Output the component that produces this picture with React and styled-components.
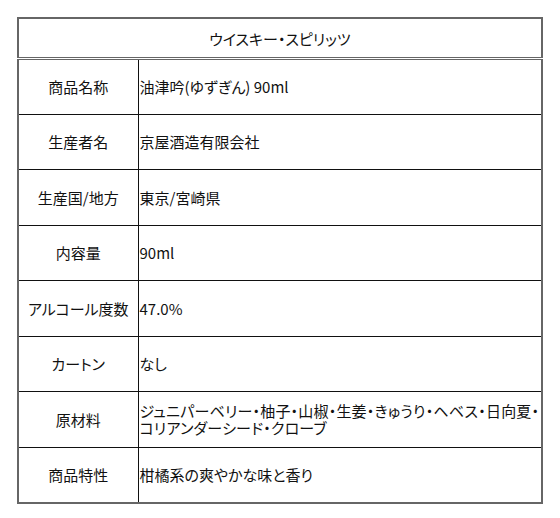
import React from "react";
import styled, { createGlobalStyle } from "styled-components";

const GlobalStyle = createGlobalStyle`
  html, body {
    margin: 0;
    padding: 0;
    background: #fff;
  }
  body {
    font-family: "Noto Sans CJK JP", "DejaVu Sans", sans-serif;
    color: #111;
  }
`;

const Page = styled.div`
  padding: 17px 17px 0 17px;
  width: 526px;
`;

const Table = styled.table`
  width: 526px;
  border-collapse: collapse;
  table-layout: fixed;
  border: 2px solid #666;
  font-size: 15px;
  line-height: 17px;
  font-feature-settings: "palt";
`;

const HeadCell = styled.th`
  height: 38px;
  padding: 0;
  font-weight: normal;
  text-align: center;
  border-bottom: 3px double #666;
`;

const Row = styled.tr`
  height: 55.5px;
  & + & td,
  & + & th {
    border-top: 1px solid #111;
  }
`;

const Label = styled.th`
  padding: 0;
  font-weight: normal;
  text-align: center;
  border-right: 1px solid #111;
`;

const Value = styled.td`
  padding: 0 0 0 1px;
  text-align: left;
`;

const Line = styled.span`
  display: block;
  white-space: nowrap;
  letter-spacing: 0.2px;
`;

const rows = [
  ["商品名称", "油津吟(ゆずぎん) 90ml"],
  ["生産者名", "京屋酒造有限会社"],
  ["生産国/地方", "東京/宮崎県"],
  ["内容量", "90ml"],
  ["アルコール度数", "47.0%"],
  ["カートン", "なし"],
  [
    "原材料",
    <>
      <Line>ジュニパーベリー・柚子・山椒・生姜・きゅうり・ヘベス・日向夏・</Line>
      <Line>コリアンダーシード・クローブ</Line>
    </>,
  ],
  ["商品特性", "柑橘系の爽やかな味と香り"],
];

export default function App() {
  return (
    <>
      <GlobalStyle />
      <Page>
        <Table>
          <colgroup>
            <col style={{ width: 120 }} />
            <col />
          </colgroup>
          <thead>
            <tr>
              <HeadCell colSpan={2}>ウイスキー・スピリッツ</HeadCell>
            </tr>
          </thead>
          <tbody>
            {rows.map(([label, value]) => (
              <Row key={label}>
                <Label>{label}</Label>
                <Value>{value}</Value>
              </Row>
            ))}
          </tbody>
        </Table>
      </Page>
    </>
  );
}
